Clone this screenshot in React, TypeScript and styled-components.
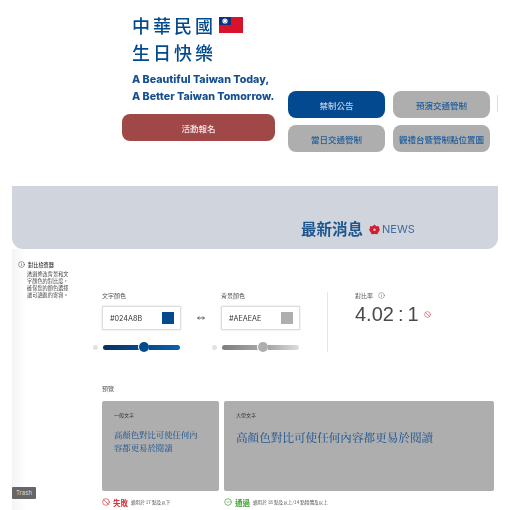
import styled, { createGlobalStyle } from 'styled-components';
import { Ban, CircleCheck, Info, MoveHorizontal } from 'lucide-react';

const navy = '#024a8b';
const grey = '#aeaeae';

const GlobalStyle = createGlobalStyle`
  html, body {
    margin: 0;
    padding: 0;
    background: #fff;
  }
  body {
    font-family: 'Noto Sans CJK TC', 'Inter', sans-serif;
    overflow: hidden;
  }
`;

const Page = styled.div`
  position: relative;
  width: 510px;
  height: 510px;
  overflow: hidden;
  filter: blur(0.4px);
`;

const Hero = styled.section`
  display: grid;
  grid-template-columns: 153px 202px;
  column-gap: 13px;
  height: 186px;
  padding: 11px 0 0 122px;
  box-sizing: border-box;
`;

const HeroLeft = styled.div`
  display: flex;
  flex-direction: column;
`;

const Title = styled.h1`
  display: flex;
  align-items: center;
  gap: 3px;
  margin: 0 0 0 10px;
  height: 27px;
  font-size: 18px;
  font-weight: 500;
  letter-spacing: 3px;
  color: ${navy};
  white-space: nowrap;
`;

const Slogan = styled.p`
  margin: 7px 0 0 10px;
  font-family: 'Inter', sans-serif;
  font-size: 10.7px;
  font-weight: 800;
  line-height: 16.5px;
  color: #164f8f;
  white-space: nowrap;
`;

const SignUp = styled.button`
  height: 27px;
  margin-top: 9px;
  padding: 0;
  border: 0;
  border-radius: 8px;
  background: #a04848;
  color: #f4e4e4;
  font-family: inherit;
  font-size: 8.5px;
  font-weight: 500;
`;

const NavGrid = styled.div`
  display: grid;
  grid-template-columns: 97px 97px;
  grid-auto-rows: 27px;
  gap: 7px 8px;
  align-content: start;
  margin-top: 80px;
`;

const NavButton = styled.button<{ $active?: boolean }>`
  border: 0;
  padding: 0;
  border-radius: 8px;
  background: ${(p) => (p.$active ? '#03498f' : grey)};
  color: ${(p) => (p.$active ? '#b9cde2' : '#1c5b9b')};
  font-family: inherit;
  font-size: 8.5px;
  font-weight: 500;
  white-space: nowrap;
`;

const Banner = styled.section`
  display: flex;
  align-items: flex-end;
  justify-content: flex-start;
  gap: 6px;
  width: 486px;
  height: 63px;
  margin-left: 12px;
  padding: 0 0 10px 289px;
  box-sizing: border-box;
  border-radius: 0 0 11px 11px;
  background: #d0d4dc;
`;

const BannerTitle = styled.h2`
  margin: 0;
  font-size: 15.5px;
  line-height: 22px;
  font-weight: 700;
  color: #1d5790;
`;

const NewsTag = styled.span`
  display: flex;
  align-items: center;
  gap: 2px;
  height: 20px;
  font-family: 'Inter', sans-serif;
  font-size: 11px;
  color: #3f6c9c;
`;

const Tool = styled.section`
  display: grid;
  grid-template-columns: 90px 392px;
  height: 261px;
  margin-left: 12px;
  background: linear-gradient(90deg, #f4f4f4 0, #fff 14px);
`;

const Side = styled.aside`
  padding: 12px 0 0 6px;
`;

const SideHead = styled.div`
  display: flex;
  align-items: center;
  gap: 3px;
  font-size: 5.2px;
  font-weight: 500;
  color: #333;
`;

const SideText = styled.p`
  margin: 2px 0 0 9px;
  width: 46px;
  font-size: 5.2px;
  line-height: 7px;
  color: #444;
`;

const Main = styled.div`
  display: flex;
  flex-direction: column;
`;

const Controls = styled.div`
  display: flex;
  height: 130px;
  padding-top: 41px;
  box-sizing: border-box;
`;

const Field = styled.div`
  display: flex;
  flex-direction: column;
  width: 79px;
`;

const SmallLabel = styled.label`
  height: 11px;
  font-size: 6px;
  line-height: 11px;
  color: #555;
`;

const ColorBox = styled.div`
  display: flex;
  align-items: center;
  justify-content: space-between;
  height: 24px;
  margin-top: 5px;
  padding: 0 6px 0 7px;
  box-sizing: border-box;
  border: 1px solid #ddd;
  box-shadow: 0 0 2px rgba(0, 0, 0, 0.12);
  font-family: 'Inter', sans-serif;
  font-size: 7.2px;
  color: #333;
`;

const Swatch = styled.span<{ $color: string }>`
  width: 12px;
  height: 12px;
  background: ${(p) => p.$color};
`;

const Swap = styled.div`
  display: flex;
  justify-content: center;
  width: 40px;
  padding-top: 24px;
  color: #444;
`;

const SliderRow = styled.div`
  display: flex;
  align-items: center;
  height: 10px;
  margin: 12px 1px 0 -9px;
`;

const SliderDot = styled.span`
  width: 5px;
  height: 5px;
  margin-right: 5px;
  border-radius: 50%;
  background: #e2e2e2;
`;

const Track = styled.span<{ $grow: number; $from: string; $to: string; $side: 'left' | 'right' }>`
  flex: ${(p) => p.$grow} 0 0;
  height: 5px;
  border-radius: ${(p) => (p.$side === 'left' ? '3px 0 0 3px' : '0 3px 3px 0')};
  background: linear-gradient(90deg, ${(p) => p.$from}, ${(p) => p.$to});
`;

const Thumb = styled.span<{ $color: string }>`
  flex: none;
  width: 10px;
  height: 10px;
  border-radius: 50%;
  background: ${(p) => p.$color};
  box-shadow: 0 0 0 1px #fff;
`;

const Divider = styled.div`
  width: 1px;
  height: 60px;
  margin: 2px 27px 0 27px;
  background: #e6e6e6;
`;

const Ratio = styled.div`
  display: flex;
  flex-direction: column;
`;

const RatioHead = styled.div`
  display: flex;
  align-items: center;
  gap: 5px;
  height: 11px;
  font-size: 6px;
  color: #555;
`;

const RatioValue = styled.div`
  display: flex;
  align-items: center;
  gap: 5px;
  margin-top: 1px;
  font-family: 'Liberation Sans', sans-serif;
  font-size: 20px;
  line-height: 24px;
  word-spacing: -1.5px;
  color: #4a4a4a;
  white-space: nowrap;
`;

const PreviewLabel = styled.div`
  height: 12px;
  margin-top: 4px;
  font-size: 6px;
  line-height: 12px;
  color: #555;
`;

const Cards = styled.div`
  display: grid;
  grid-template-columns: 117px 270px;
  column-gap: 5px;
  margin-top: 6px;
`;

const Card = styled.div`
  height: 90px;
  padding: 10px 12px;
  box-sizing: border-box;
  border-radius: 2px;
  background: ${grey};
`;

const CardLabel = styled.div`
  height: 7px;
  font-size: 5px;
  line-height: 7px;
  color: #333;
`;

const Sample = styled.p<{ $large?: boolean }>`
  margin: ${(p) => (p.$large ? '8px 0 0' : '10px 0 0')};
  max-width: ${(p) => (p.$large ? 'none' : '86px')};
  font-family: 'Noto Serif CJK TC', 'Noto Sans CJK TC', serif;
  font-size: ${(p) => (p.$large ? '11.6px' : '8.4px')};
  line-height: ${(p) => (p.$large ? '22px' : '13px')};
  font-weight: 500;
  color: #2a5c95;
`;

const Verdict = styled.div`
  display: flex;
  align-items: center;
  gap: 3px;
  height: 12px;
  margin-top: 5px;
  white-space: nowrap;
`;

const VerdictWord = styled.span<{ $pass?: boolean }>`
  font-size: 7.5px;
  font-weight: 700;
  color: ${(p) => (p.$pass ? '#3f9f2f' : '#d8323c')};
`;

const VerdictNote = styled.span`
  font-size: 4.6px;
  color: #555;
`;

const TrashTag = styled.div`
  position: absolute;
  left: 12px;
  top: 487px;
  width: 24px;
  height: 12px;
  border-radius: 1px;
  background: #666;
  color: #ddd;
  font-family: 'Inter', sans-serif;
  font-size: 6px;
  line-height: 12px;
  text-align: center;
`;

const EdgeMark = styled.span`
  position: absolute;
  left: 497px;
  top: 95px;
  width: 1px;
  height: 17px;
  background: #ddd;
`;

function TaiwanFlag() {
  return (
    <svg width="24" height="16" viewBox="0 0 24 16" aria-hidden="true">
      <rect width="24" height="16" fill="#d8122a" />
      <rect width="12" height="8" fill="#10307f" />
      <circle cx="6" cy="4" r="2.6" fill="#fff" />
      <circle cx="6" cy="4" r="1.5" fill="#10307f" />
      <circle cx="6" cy="4" r="1.2" fill="#fff" />
    </svg>
  );
}

function PlumBlossom() {
  return (
    <svg width="11" height="11" viewBox="0 0 12 12" aria-hidden="true">
      <path
        d="M6 .6 8 2.5l2.8-.1.4 2.8L12 6.4l-1.6 2.4-1.3 2.4-3.1-.4-3.1.4L1.6 8.8 0 6.4l.8-1.2.4-2.8L4 2.5z"
        fill="#cf1f34"
      />
      <circle cx="6" cy="6.2" r="1.3" fill="#f6c9c9" />
    </svg>
  );
}

type SliderProps = {
  before: number;
  after: number;
  from: string;
  mid: string;
  to: string;
  thumb: string;
};

function Slider({ before, after, from, mid, to, thumb }: SliderProps) {
  return (
    <SliderRow>
      <SliderDot />
      <Track $grow={before} $from={from} $to={mid} $side="left" />
      <Thumb $color={thumb} />
      <Track $grow={after} $from={mid} $to={to} $side="right" />
    </SliderRow>
  );
}

export default function App() {
  return (
    <Page>
      <GlobalStyle />
      <Hero>
        <HeroLeft>
          <Title>
            中華民國 <TaiwanFlag />
          </Title>
          <Title>生日快樂</Title>
          <Slogan>
            A Beautiful Taiwan Today,
            <br />
            A Better Taiwan Tomorrow.
          </Slogan>
          <SignUp>活動報名</SignUp>
        </HeroLeft>
        <NavGrid>
          <NavButton $active>禁制公告</NavButton>
          <NavButton>預演交通管制</NavButton>
          <NavButton>當日交通管制</NavButton>
          <NavButton>觀禮台暨管制點位置圖</NavButton>
        </NavGrid>
      </Hero>
      <EdgeMark />
      <Banner>
        <BannerTitle>最新消息</BannerTitle>
        <NewsTag>
          <PlumBlossom />
          NEWS
        </NewsTag>
      </Banner>
      <Tool>
        <Side>
          <SideHead>
            <Info size={7} strokeWidth={1.6} />
            對比檢查器
          </SideHead>
          <SideText>透過修改背景和文字顏色的對比度，確保您的顏色選擇讓可讀進的寄容。</SideText>
        </Side>
        <Main>
          <Controls>
            <Field>
              <SmallLabel>文字顏色</SmallLabel>
              <ColorBox>
                #024A8B
                <Swatch $color={navy} />
              </ColorBox>
              <Slider before={36} after={31} from="#0a2f5c" mid="#064a8c" to="#0a62b4" thumb={navy} />
            </Field>
            <Swap>
              <MoveHorizontal size={8} strokeWidth={2.4} />
            </Swap>
            <Field>
              <SmallLabel>背景顏色</SmallLabel>
              <ColorBox>
                #AEAEAE
                <Swatch $color={grey} />
              </ColorBox>
              <Slider before={37} after={31} from="#7d7d7d" mid="#a4a4a4" to="#dedede" thumb={grey} />
            </Field>
            <Divider />
            <Ratio>
              <RatioHead>
                對比率
                <Info size={7} strokeWidth={1.4} />
              </RatioHead>
              <RatioValue>
                4.02 : 1
                <Ban size={7} strokeWidth={2} color="#d0505a" />
              </RatioValue>
            </Ratio>
          </Controls>
          <PreviewLabel>預覽</PreviewLabel>
          <Cards>
            <div>
              <Card>
                <CardLabel>一般文字</CardLabel>
                <Sample>高顏色對比可使任何內容都更易於閱讀</Sample>
              </Card>
              <Verdict>
                <Ban size={8} strokeWidth={2} color="#d8323c" />
                <VerdictWord>失敗</VerdictWord>
                <VerdictNote>適用於 17 點及以下</VerdictNote>
              </Verdict>
            </div>
            <div>
              <Card>
                <CardLabel>大型文字</CardLabel>
                <Sample $large>高顏色對比可使任何內容都更易於閱讀</Sample>
              </Card>
              <Verdict>
                <CircleCheck size={8} strokeWidth={2} color="#3f9f2f" />
                <VerdictWord $pass>通過</VerdictWord>
                <VerdictNote>適用於 18 點及以上/14 點粗體及以上</VerdictNote>
              </Verdict>
            </div>
          </Cards>
        </Main>
      </Tool>
      <TrashTag>Trash</TrashTag>
    </Page>
  );
}
